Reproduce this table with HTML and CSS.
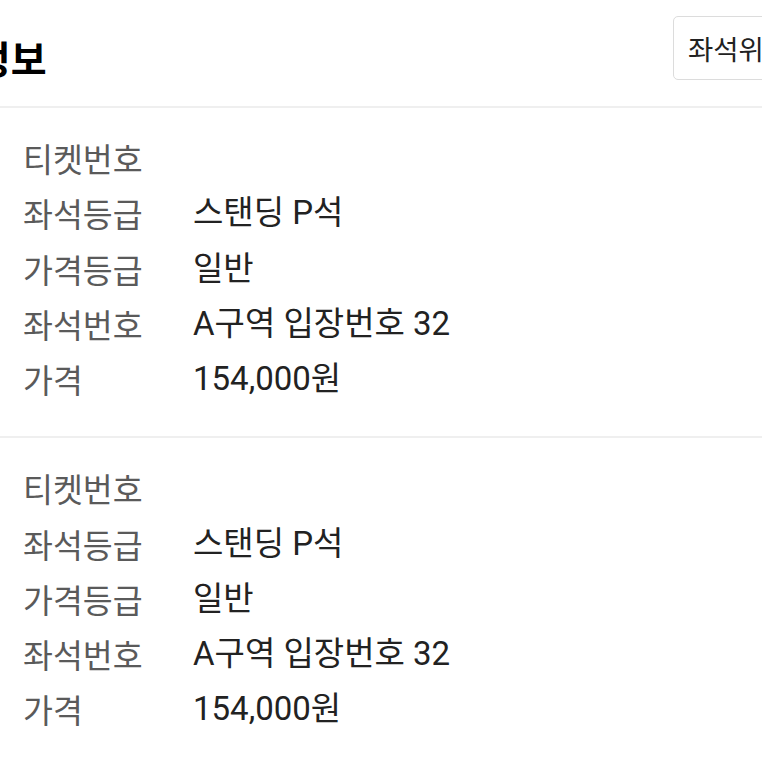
FILE: index.html
```html
<!DOCTYPE html>
<html lang="ko">
<head>
<meta charset="utf-8">
<title>예매정보</title>
<link rel="stylesheet" href="styles.css">
</head>
<body>
<div class="page">
  <header class="header">
    <h2 class="title">예매정보</h2>
    <button class="seat-btn" type="button">좌석위치</button>
  </header>

  <section class="ticket">
    <div class="row"><span class="label">티켓번호</span><span class="value"></span></div>
    <div class="row"><span class="label">좌석등급</span><span class="value">스탠딩 P석</span></div>
    <div class="row"><span class="label">가격등급</span><span class="value">일반</span></div>
    <div class="row"><span class="label">좌석번호</span><span class="value">A구역 입장번호 32</span></div>
    <div class="row"><span class="label">가격</span><span class="value">154,000원</span></div>
  </section>

  <section class="ticket">
    <div class="row"><span class="label">티켓번호</span><span class="value"></span></div>
    <div class="row"><span class="label">좌석등급</span><span class="value">스탠딩 P석</span></div>
    <div class="row"><span class="label">가격등급</span><span class="value">일반</span></div>
    <div class="row"><span class="label">좌석번호</span><span class="value">A구역 입장번호 32</span></div>
    <div class="row"><span class="label">가격</span><span class="value">154,000원</span></div>
  </section>
</div>
</body>
</html>
```

FILE: styles.css
```css
html, body {
  margin: 0;
  padding: 0;
  background: #ffffff;
}

body {
  width: 762px;
  height: 762px;
  overflow: hidden;
  font-family: Roboto, "Noto Sans CJK KR", sans-serif;
}

.page {
  width: 762px;
}

.header {
  display: flex;
  align-items: flex-start;
  padding-bottom: 26px;
  width: 900px;
}

.title {
  flex: none;
  width: 770px;
  margin: 35px 0 0 -97px;
  font-family: "Noto Sans CJK KR", sans-serif;
  font-size: 39px;
  line-height: 44px;
  font-weight: 700;
  color: #000000;
  white-space: nowrap;
}

.seat-btn {
  flex: none;
  margin-top: 16px;
  height: 64px;
  padding: 0 14px;
  background: #ffffff;
  border: 1px solid #dcdcdc;
  border-radius: 5px;
  font-family: "Noto Sans CJK KR", sans-serif;
  font-size: 27.5px;
  color: #222222;
  white-space: nowrap;
}

.ticket {
  border-top: 2px solid #efefef;
  padding: 22px 0 30px 23px;
}

.row {
  display: flex;
  align-items: center;
  height: 55.25px;
}

.label {
  width: 170px;
  flex-shrink: 0;
  font-family: "Noto Sans CJK KR", sans-serif;
  font-size: 32.5px;
  line-height: 55px;
  color: #5a5a5a;
}

.value {
  font-size: 33px;
  line-height: 55px;
  color: #222222;
  white-space: nowrap;
}
```
